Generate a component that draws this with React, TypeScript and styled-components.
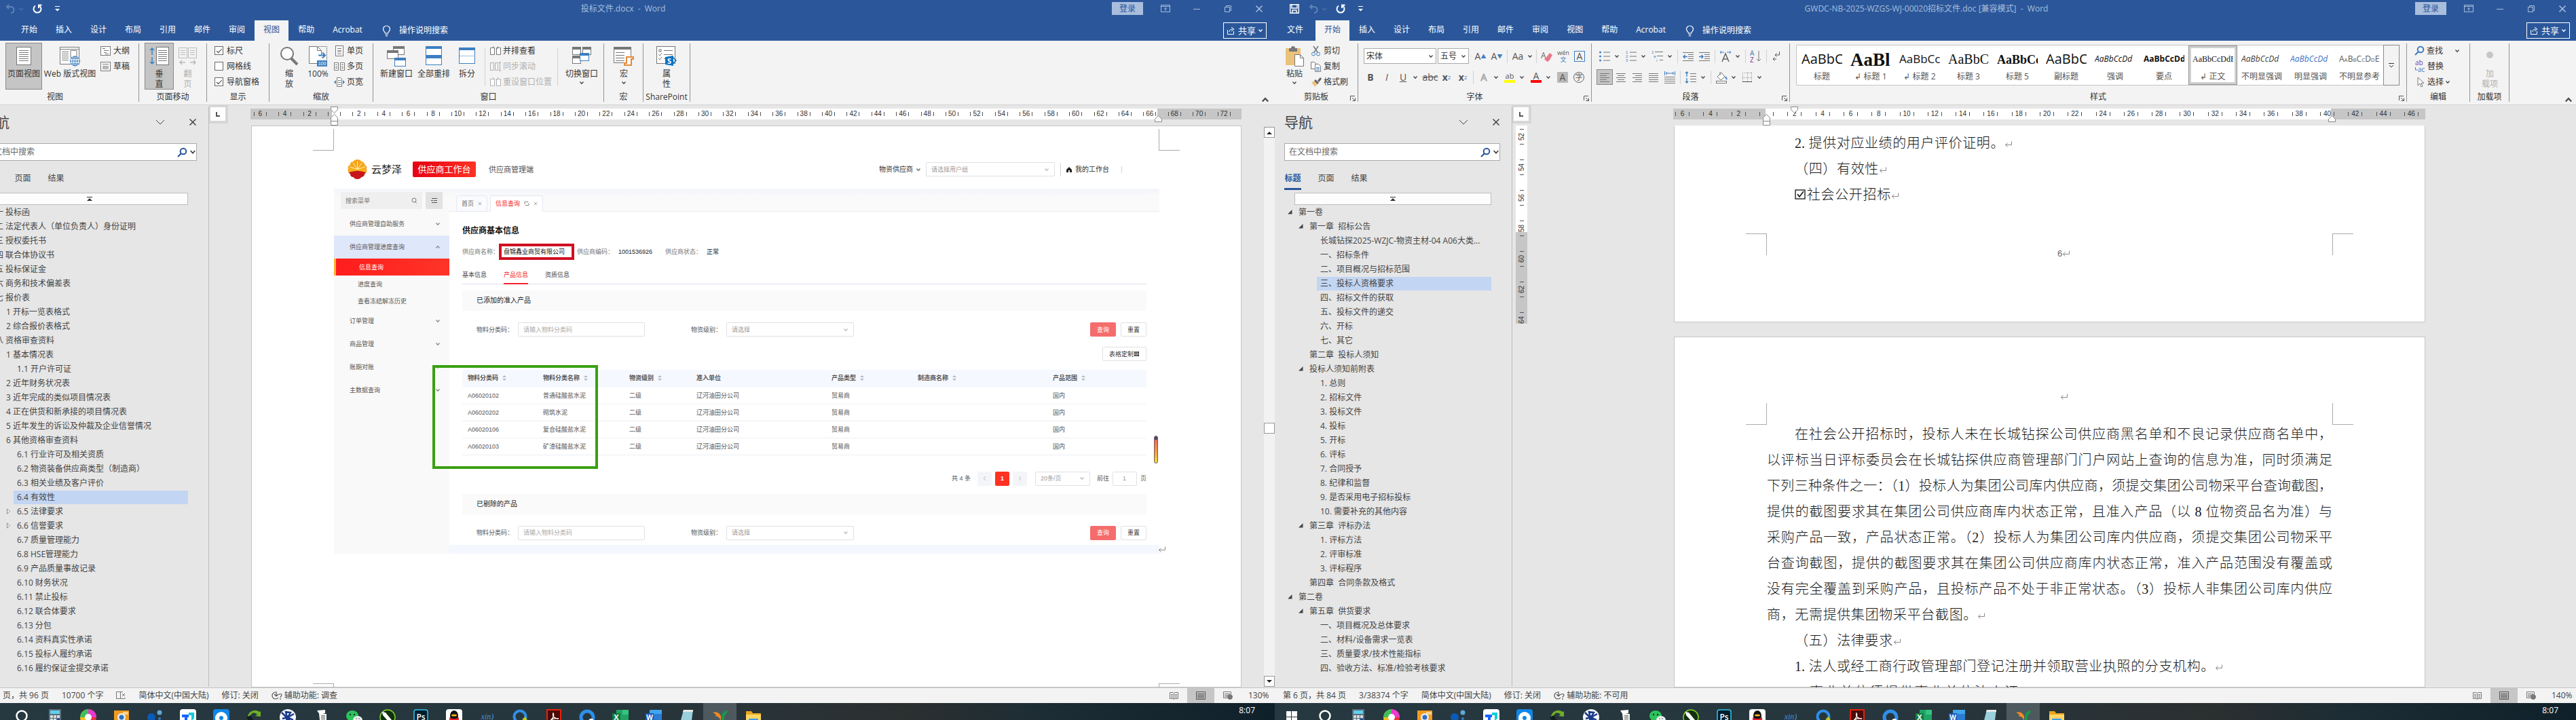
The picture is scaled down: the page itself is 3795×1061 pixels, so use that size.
import { ReactNode } from 'react';
import styled, { createGlobalStyle, css } from 'styled-components';

const UI_FONT = "'Open Sans', 'Noto Sans CJK SC', sans-serif";
const PORTAL_FONT = "'Liberation Sans', 'Noto Sans CJK SC', sans-serif";
const DOC_FONT = "'Liberation Serif', 'Noto Sans CJK SC', serif";

const GlobalStyle = createGlobalStyle`
  * { box-sizing: border-box; }
  body { margin: 0; overflow: hidden; background: #e6e6e6; }
  button, input, select { font: inherit; color: inherit; margin: 0; padding: 0; border: 0; background: none; border-radius: 0; }
  button { white-space: nowrap; }
  select { appearance: none; }
  svg { display: block; flex: none; }
`;

// 两块屏幕
const Desktop = styled.div`
  display: grid;
  grid-template-columns: 1878fr 1917fr;
  height: 100vh;
  font: 12px/16px ${UI_FONT};
  color: #333;
`;
const Screen = styled.div`
  overflow: hidden;
  min-width: 0;
`;
const WordWindow = styled.div<{ $cutLeft?: number; $cutRight?: number }>`
  display: flex;
  flex-direction: column;
  height: 100vh;
  margin-left: -${(p) => p.$cutLeft || 0}px;
  margin-right: -${(p) => p.$cutRight || 0}px;
`;

// 标题栏
const TitleBar = styled.header`
  display: grid;
  grid-template-columns: 1fr auto 1fr;
  align-items: center;
  height: 30px;
  flex: none;
  background: #2b579a;
  color: #a9bedc;
`;
const QuickAccess = styled.div`
  display: flex;
  align-items: center;
  gap: 14px;
  padding: 0 0 4px 22px;
`;
const WindowTitle = styled.h1`
  margin: 0;
  padding-bottom: 4px;
  font-size: 12px;
  font-weight: 400;
  white-space: pre;
`;
const WindowButtons = styled.div`
  display: flex;
  justify-content: flex-end;
  align-items: center;
  padding-bottom: 5px;
`;
const LoginButton = styled.button`
  width: 46px;
  height: 19px;
  margin-right: 10px;
  background: #a9bedc;
  color: #2b579a;
`;
const CaptionButton = styled.button`
  width: 46px;
  display: flex;
  justify-content: center;
`;

// 选项卡
const TabBar = styled.nav<{ $start: number }>`
  display: flex;
  height: 30px;
  flex: none;
  gap: 1px;
  padding-left: ${(p) => p.$start}px;
  background: #2b579a;
  color: #fff;
`;
const RibbonTab = styled.button<{ $active?: boolean; $file?: boolean }>`
  padding: 0 13px 2px;
  margin-right: ${(p) => (p.$file ? 4 : 0)}px;
  background: ${(p) => (p.$active ? '#f3f3f3' : 'transparent')};
  color: ${(p) => (p.$active ? '#2b579a' : '#fff')};
`;
const TellMe = styled.button`
  display: flex;
  align-items: center;
  gap: 12px;
  margin-left: 15px;
`;
const ShareButton = styled.button`
  display: flex;
  align-items: center;
  justify-content: center;
  gap: 4px;
  width: 64px;
  height: 24px;
  margin: 3px 12px 0 auto;
  border: 1px solid #fff;
  font-size: 13px;
`;

// 功能区
const Ribbon = styled.div`
  display: flex;
  height: 95px;
  flex: none;
  background: #f3f3f3;
  border-bottom: 1px solid #d2d2d2;
`;
const Group = styled.section<{ $w?: number }>`
  width: ${(p) => (p.$w ? `${p.$w}px` : 'auto')};
  display: flex;
  flex-direction: column;
  flex: none;
  position: relative;
`;
const GroupBody = styled.div<{ $pad?: number }>`
  display: flex;
  flex: 1;
  padding: 3px 0 0 ${(p) => p.$pad || 0}px;
`;
const GroupName = styled.div`
  height: 20px;
  line-height: 18px;
  text-align: center;
`;
const GroupLine = styled.div`
  width: 1px;
  margin: 4px 0;
  background: #949494;
`;
const ThinLine = styled.div<{ $h?: number; $gap?: number }>`
  width: 1px;
  height: ${(p) => p.$h || 20}px;
  margin: 0 ${(p) => p.$gap || 3}px;
  align-self: center;
  background: #d2d2d2;
`;
const Launcher = styled.button`
  position: absolute;
  right: 3px;
  bottom: 5px;
`;
const BigButton = styled.button<{ $w: number; $on?: boolean; $off?: boolean }>`
  width: ${(p) => p.$w}px;
  height: 69px;
  display: flex;
  flex-direction: column;
  align-items: center;
  padding-top: 4px;
  border: 1px solid ${(p) => (p.$on ? '#8a8a8a' : 'transparent')};
  background: ${(p) => (p.$on ? '#c5c5c5' : 'transparent')};
  color: ${(p) => (p.$off ? '#b1b1b1' : 'inherit')};
  line-height: 15px;
  white-space: pre;
  gap: 3px;
`;
const SmallColumn = styled.div<{ $pad?: number }>`
  display: flex;
  flex-direction: column;
  padding-left: ${(p) => p.$pad || 0}px;
`;
const SmallButton = styled.button<{ $off?: boolean }>`
  display: flex;
  align-items: center;
  gap: 3px;
  height: 23px;
  color: ${(p) => (p.$off ? '#b1b1b1' : 'inherit')};
`;
const CheckLabel = styled.label`
  display: flex;
  align-items: center;
  gap: 5px;
  height: 23px;
`;
const CheckBox = styled.input`
  appearance: none;
  width: 13px;
  height: 13px;
  background: #fff;
  border: 1px solid #6a6a6a;
  display: grid;
  place-items: center;
  &:checked::after {
    content: '';
    width: 3px;
    height: 7px;
    margin-bottom: 2px;
    border: solid #333;
    border-width: 0 1px 1px 0;
    rotate: 45deg;
  }
`;
const ToolRows = styled.div`
  display: flex;
  flex-direction: column;
  gap: 8px;
  padding-top: 8px;
`;
const ToolRow = styled.div`
  display: flex;
  height: 23px;
`;
const Tool = styled.button<{ $w?: number; $on?: boolean }>`
  width: ${(p) => p.$w || 24}px;
  display: flex;
  align-items: center;
  font-size: 14px;
  color: #555;
  ${(p) => p.$on && css`
    background: #c5c5c5;
    outline: 1px solid #8a8a8a;
    outline-offset: -1px;
  `}
`;
const ToolFace = styled.span`
  width: 24px;
  display: flex;
  justify-content: center;
  align-items: center;
`;
const Caret = styled.span`
  width: 12px;
  display: flex;
  justify-content: center;
`;
const ComboBox = styled.label<{ $w: number }>`
  display: flex;
  align-items: center;
  width: ${(p) => p.$w}px;
  margin-left: 2px;
  padding: 0 4px 0 3px;
  background: #fff;
  border: 1px solid #ababab;
  select { flex: 1; min-width: 0; outline: 0; }
`;

const Gallery = styled.div`
  display: flex;
  height: 60px;
  margin: 3px 10px 0 9px;
  padding-left: 1px;
  background: #fff;
  border: 1px solid #c6c6c6;
`;
const StyleCard = styled.button<{ $on?: boolean }>`
  width: 72px;
  display: flex;
  flex-direction: column;
  justify-content: flex-end;
  padding: 0 4px 4px;
  color: #555;
  ${(p) => p.$on && css`
    border: 1px solid #949494;
    padding: 0 3px 3px;
    box-shadow: inset 0 0 0 3px #d0d0d0;
  `}
`;
const StylePreview = styled.span<{ $size: number }>`
  height: 36px;
  line-height: 36px;
  margin: 0 2px;
  overflow: hidden;
  text-align: left;
  font-size: ${(p) => p.$size}px;
`;
const StyleName = styled.span`
  text-align: center;
`;
const GalleryMore = styled.button`
  width: 24px;
  margin: -1px;
  border: 1px solid #8a8a8a;
  background: #f3f3f3;
  display: grid;
  place-items: center;
`;
const Collapse = styled.button`
  margin: auto 9px 2px auto;
`;

// 工作区
const Workspace = styled.main`
  flex: 1;
  min-height: 0;
  display: grid;
  grid-template-columns: 350px 1fr;
  background: #e6e6e6;
`;
const NavPane = styled.aside`
  margin: 2px 0 1px;
  padding: 12px 17px 0 14px;
  border-right: 1px solid #bdbdbd;
  color: #444;
  min-width: 0;
  overflow: hidden;
`;
const NavHead = styled.div`
  display: flex;
  align-items: center;
  height: 24px;
  gap: 35px;
  margin-bottom: 18px;
  padding-bottom: 2px;
  h2 { flex: 1; margin: 0; font-size: 21px; line-height: 24px; font-weight: 400; }
`;
const NavSearch = styled.label`
  display: flex;
  align-items: center;
  gap: 4px;
  height: 26px;
  padding: 0 1px 0 6px;
  background: #fff;
  border: 1px solid #ababab;
  input { flex: 1; outline: 0; }
  input::placeholder { color: #6a6a6a; }
`;
const NavTabs = styled.div<{ $start: number }>`
  display: flex;
  gap: 24px;
  height: 43px;
  padding: 17px 0 0 ${(p) => p.$start}px;
`;
const NavTab = styled.button<{ $active?: boolean }>`
  width: 25px;
  height: 26px;
  padding-bottom: 6px;
  border-bottom: 3px solid ${(p) => (p.$active ? '#2b579a' : 'transparent')};
  color: ${(p) => (p.$active ? '#2b579a' : '#444')};
  font-weight: ${(p) => (p.$active ? 700 : 400)};
`;
const JumpTop = styled.button`
  display: flex;
  justify-content: center;
  align-items: center;
  width: 290px;
  height: 18px;
  margin: 4px 0 0 15px;
  background: #fdfdfd;
  border: 1px solid #bdbdbd;
`;
const Tree = styled.ul`
  list-style: none;
  margin: 0;
  padding: 0 13px 0 5px;
`;
const TreeRow = styled.li<{ $level: number }>`
  display: flex;
  align-items: center;
  height: 21px;
  padding-left: ${(p) => p.$level * 16}px;
`;
const TreeArrow = styled.span`
  width: 11px;
`;
const TreeLabel = styled.button<{ $on?: boolean }>`
  flex: 1;
  height: 20px;
  padding-left: 5px;
  text-align: left;
  white-space: pre;
  background: ${(p) => (p.$on ? '#c2d5f2' : 'transparent')};
`;

const DocArea = styled.div`
  display: grid;
  grid-template-columns: 29px 1fr 16px;
  min-width: 0;
  min-height: 0;
`;
const RulerSide = styled.div`
  overflow: hidden;
`;
const TabStop = styled.button`
  width: 28px;
  height: 27px;
  margin-bottom: 3px;
  border: solid #d6d6d6;
  border-width: 3px 4px 4px 2px;
  background: #fdfdfd;
  display: grid;
  place-items: center;
`;
const VRuler = styled.div`
  width: 17px;
  height: 292px;
  margin-left: 5px;
  overflow: hidden;
  background: linear-gradient(#fff 157px, #c6c6c6 157px);
  font: 10px/16px ${PORTAL_FONT};
`;
const VCells = styled.div`
  margin-top: -6px;
`;
const VCell = styled.div`
  height: 45px;
  display: flex;
  flex-direction: column;
  justify-content: center;
  align-items: center;
  &::before, &::after { content: ''; width: 6px; height: 1px; background: #555; }
  span { height: 21px; text-align: center; writing-mode: vertical-rl; rotate: 180deg; }
`;
const DocColumn = styled.div`
  display: flex;
  flex-direction: column;
  min-width: 0;
  min-height: 0;
`;
const HRuler = styled.div<{ $side: number; $left: number; $right: number }>`
  position: relative;
  flex: none;
  height: 16px;
  margin: 5px ${(p) => p.$side}px 9px ${(p) => p.$side - 1}px;
  background: linear-gradient(to right, #c6c6c6 ${(p) => p.$left}px, #fff ${(p) => p.$left}px, #fff calc(100% - ${(p) => p.$right}px), #c6c6c6 calc(100% - ${(p) => p.$right}px));
  font: 10px/16px ${PORTAL_FONT};
`;
const HCells = styled.div<{ $before: number; $after: number }>`
  display: flex;
  height: 16px;
  margin: 0 ${(p) => p.$after}px 0 -${(p) => p.$before}px;
`;
const HCell = styled.div<{ $gap: number }>`
  flex: 1;
  display: flex;
  justify-content: center;
  align-items: center;
  &::before, &::after { content: ''; width: 1px; height: 6px; background: #555; }
  span { width: ${(p) => p.$gap}px; text-align: center; }
`;
const Marker = styled.span<{ $left?: number; $right?: number; $top: number }>`
  position: absolute;
  top: ${(p) => p.$top}px;
  ${(p) => (p.$left !== undefined ? `left: ${p.$left - 5}px;` : `right: ${(p.$right || 0) - 6}px;`)}
`;
const Pages = styled.div<{ $side: number }>`
  flex: 1;
  min-height: 0;
  overflow: hidden;
  display: flex;
  flex-direction: column;
  padding: 0 ${(p) => p.$side}px;
`;
const Paper = styled.article<{ $margin: number; $h?: number }>`
  position: relative;
  flex: ${(p) => (p.$h ? `0 0 ${p.$h}px` : '1 0 0')};
  min-height: 0;
  padding: 0 ${(p) => p.$margin}px;
  background: #fff;
  border: 1px solid #c6c6c6;
  border-top-color: ${(p) => (p.$h ? '#fff' : '#c6c6c6')};
`;
// 页边距角标
const Corner = styled.i<{ $x: 'left' | 'right'; $m: number; $top?: number; $bottom?: number; $foot?: boolean }>`
  position: absolute;
  ${(p) => p.$x}: ${(p) => p.$m - 31}px;
  ${(p) => (p.$top !== undefined ? `top: ${p.$top}px;` : `bottom: ${p.$bottom}px;`)}
  width: 31px;
  height: 32px;
  border: 0 solid #ababab;
  border-${(p) => (p.$x === 'left' ? 'right' : 'left')}-width: 1px;
  border-${(p) => (p.$foot ? 'top' : 'bottom')}-width: 1px;
`;
// 文档网格：每行两端对齐
const DocLine = styled.p<{ $indent?: boolean; $w?: number }>`
  width: ${(p) => (p.$w ? `${p.$w}px` : 'auto')};
  height: 38px;
  margin: 0;
  padding-left: ${(p) => (p.$indent ? 41 : 0)}px;
  font: 300 20px/38px ${DOC_FONT};
  color: #1a1a1a;
  text-align: justify;
  text-align-last: justify;
  svg { display: inline-block; }
`;
const PageNumber = styled.p<{ $top: number }>`
  display: flex;
  justify-content: center;
  align-items: center;
  height: 20px;
  margin: ${(p) => p.$top}px 0 0 42px;
  font: 13px/20px ${PORTAL_FONT};
  color: #666;
`;
const ScrollBar = styled.div`
  display: flex;
  flex-direction: column;
  margin: 32px 0 1px;
  background: #f2f2f2;
`;
const ScrollTrack = styled.span<{ $part: number }>`
  flex: ${(p) => p.$part};
`;
const ScrollPart = styled.button`
  height: 16px;
  background: #fff;
  border: 1px solid #999;
  display: grid;
  place-items: center;
`;

// 供应商门户
const Portal = styled.div`
  position: relative;
  margin-top: 35px;
  font: 9px/14px ${PORTAL_FONT};
  color: #555;
`;
const PortalHeader = styled.div`
  display: flex;
  align-items: center;
  height: 57px;
  padding: 0 36px 0 20px;
`;
const Brand = styled.span`
  margin: 0 16px 0 6px;
  font-size: 15px;
  color: #222;
`;
const RedTab = styled.button`
  width: 93px;
  height: 23px;
  background: linear-gradient(100deg, #e60012, #ff3425);
  border-radius: 2px;
  color: #fff;
  font-size: 13px;
`;
const PlainTab = styled.button`
  margin: 0 auto 0 19px;
  font-size: 11px;
`;
const HeaderLink = styled.a`
  display: flex;
  align-items: center;
  gap: 5px;
  font-size: 10px;
  color: #333;
  text-decoration: none;
`;
const Field = styled.label<{ $w: number; $gap?: number }>`
  display: flex;
  align-items: center;
  width: ${(p) => p.$w}px;
  height: 21px;
  margin-left: ${(p) => p.$gap || 0}px;
  padding: 0 8px 0 7px;
  background: #fff;
  border: 1px solid #dfe1e6;
  border-radius: 2px;
  input, select { flex: 1; min-width: 0; outline: 0; color: #999; }
  input::placeholder { color: #aaa; }
`;
const PortalBody = styled.div`
  display: grid;
  grid-template-columns: 170px 1fr;
`;
const SideMenu = styled.nav`
  background: linear-gradient(#f3f5fb, #f9f9f9 12px);
`;
const SideSearch = styled.div`
  display: flex;
  gap: 5px;
  height: 35px;
  padding: 5px 10px;
  label { display: flex; align-items: center; flex: 1; min-width: 0; padding: 0 8px 0 7px; background: #efefef; }
  input { flex: 1; min-width: 0; }
  button { flex: none; width: 25px; background: #e2e2e2; display: grid; place-items: center; }
`;
const MenuItem = styled.button<{ $open?: boolean }>`
  display: flex;
  justify-content: space-between;
  align-items: center;
  width: 100%;
  height: 34px;
  padding: 0 14px 0 23px;
  background: ${(p) => (p.$open ? '#dfe7fb' : 'transparent')};
`;
const SubItem = styled.button<{ $on?: boolean }>`
  display: block;
  width: 100%;
  height: 25px;
  text-align: left;
  padding-left: ${(p) => (p.$on ? 34 : 35)}px;
  ${(p) => p.$on && css`
    border-left: 3px solid #ffb52e;
    background: linear-gradient(90deg, #ff1d1d, #ff3427);
    color: #fff;
  `}
`;
const PortalMain = styled.div`
  position: relative;
  background: #fff;
`;
const TabStrip = styled.div`
  display: flex;
  align-items: flex-end;
  gap: 4px;
  height: 34px;
  padding-left: 10px;
  background: linear-gradient(#f3f5fb, #fafafa 12px);
  border-bottom: 1px solid #ebebeb;
`;
const PageTab = styled.button<{ $on?: boolean }>`
  display: flex;
  align-items: center;
  gap: 6px;
  height: 24px;
  padding: 0 7px;
  margin-bottom: -1px;
  border: 1px solid #e6e8f2;
  border-bottom-color: ${(p) => (p.$on ? '#fff' : '#e6e8f2')};
  border-radius: 3px 3px 0 0;
  background: ${(p) => (p.$on ? '#fff' : '#fafbff')};
  color: ${(p) => (p.$on ? '#f5222d' : '#666')};
`;
const PortalContent = styled.div`
  padding: 18px 19px 7px;
  h3 { margin: 0 0 9px; font-size: 12px; line-height: 20px; color: #111; }
`;
const InfoLine = styled.div`
  display: flex;
  align-items: center;
  height: 24px;
  color: #777;
`;
const RedFrame = styled.strong`
  width: 111px;
  height: 24px;
  margin-right: 4px;
  padding-left: 3px;
  line-height: 16px;
  border: 4px solid #cf1020;
  font-weight: 400;
  color: #111;
`;
const InfoValue = styled.span`
  margin: 0 19px 0 7px;
  color: #222;
`;
const InnerTabs = styled.div`
  display: flex;
  align-items: flex-end;
  gap: 25px;
  height: 36px;
  border-bottom: 1px solid #dcdfea;
`;
const InnerTab = styled.button<{ $on?: boolean }>`
  height: 23px;
  padding-bottom: 4px;
  margin-bottom: -1px;
  border-bottom: 2px solid ${(p) => (p.$on ? '#f5222d' : 'transparent')};
  color: ${(p) => (p.$on ? '#f5222d' : '#444')};
`;
const SectionHead = styled.h4<{ $top: number }>`
  height: 30px;
  margin: ${(p) => p.$top}px 0 17px;
  padding-left: 21px;
  background: #fafafa;
  font-size: 10px;
  line-height: 30px;
  font-weight: 400;
  color: #222;
`;
const FilterRow = styled.div`
  display: flex;
  align-items: center;
  height: 21px;
  padding-left: 21px;
`;
const FilterLabel = styled.span<{ $w: number; $gap?: number }>`
  width: ${(p) => p.$w}px;
  margin-left: ${(p) => p.$gap || 0}px;
`;
const PortalButton = styled.button<{ $red?: boolean }>`
  width: 38px;
  height: 21px;
  border: 1px solid ${(p) => (p.$red ? '#f56c6c' : '#dfe1e6')};
  border-radius: 2px;
  background: ${(p) => (p.$red ? '#f56c6c' : '#fff')};
  color: ${(p) => (p.$red ? '#fff' : '#444')};
  &:first-of-type { margin-left: auto; margin-right: 7px; }
`;
const CustomButton = styled.button`
  display: flex;
  align-items: center;
  gap: 1px;
  height: 21px;
  margin: 15px 0 13px auto;
  padding: 0 10px 0 9px;
  border: 1px solid #dfe1e6;
  border-radius: 2px;
  color: #333;
`;
const TableArea = styled.div`
  position: relative;
`;
const GreenFrame = styled.i`
  position: absolute;
  left: -44px;
  top: -7px;
  width: 244px;
  height: 153px;
  border: 4px solid #3aa012;
`;
const DataTable = styled.table`
  width: 100%;
  table-layout: fixed;
  border-collapse: collapse;
  th, td { height: 25px; padding: 0 0 0 8px; text-align: left; border-bottom: 1px solid #eef0f5; }
  th { background: #f5f8fe; font-weight: 700; border-bottom-color: #f5f8fe; }
  th svg { display: inline-block; vertical-align: -2px; margin-left: 6px; }
`;
const Pager = styled.div`
  display: flex;
  justify-content: flex-end;
  align-items: center;
  height: 21px;
  margin-top: 24px;
`;
const PagerButton = styled.button<{ $on?: boolean }>`
  width: 21px;
  height: 21px;
  margin-left: ${(p) => (p.$on ? 5 : 0)}px;
  margin-right: ${(p) => (p.$on ? 5 : 0)}px;
  display: grid;
  place-items: center;
  border-radius: 2px;
  background: ${(p) => (p.$on ? '#ff3223' : '#f4f5f8')};
  color: #fff;
  font-weight: 700;
`;
const BottomStrip = styled.div`
  height: 13px;
  background: #f4f7fe;
`;
const ScrollGear = styled.i`
  position: absolute;
  right: 2px;
  top: 364px;
  width: 6px;
  height: 41px;
  border: 1px solid #7a5a66;
  border-radius: 3px;
  background: linear-gradient(#4a4a6a 5px, #f5694f 5px, #f0a03c 60%, #f0e030);
`;
const EndMark = styled.span`
  position: absolute;
  right: -11px;
  bottom: 1px;
`;

// 状态栏
const StatusBar = styled.footer<{ $start: number }>`
  display: flex;
  align-items: center;
  gap: 19px;
  height: 23px;
  flex: none;
  padding-left: ${(p) => p.$start}px;
  background: #f3f3f3;
  border-top: 1px solid #c6c6c6;
  color: #444;
  white-space: nowrap;
`;
const StatusItem = styled.span`
  display: flex;
  align-items: center;
  gap: 3px;
`;
const ViewModes = styled.div`
  display: flex;
  align-self: stretch;
  margin-left: auto;
`;
const ViewMode = styled.button<{ $on?: boolean }>`
  width: 40px;
  display: grid;
  place-items: center;
  background: ${(p) => (p.$on ? '#c6c6c6' : 'transparent')};
`;
const Zoom = styled.span`
  width: 31px;
  margin: 0 8px 0 -9px;
`;

// 任务栏
const TaskBar = styled.footer`
  display: flex;
  height: 25px;
  flex: none;
  overflow: hidden;
  background: linear-gradient(90deg, #263840 0%, #27363d 50%, #2b2f30 72%, #1d2d35 82%, #10202a 100%);
`;
const TaskSlot = styled.button<{ $on?: boolean }>`
  width: 49px;
  height: 40px;
  display: flex;
  justify-content: center;
  padding-top: 9px;
  align-items: flex-start;
  background: ${(p) => (p.$on ? '#4d595f' : 'transparent')};
`;
const Clock = styled.time`
  margin: 3px 29px 0 auto;
  color: #fff;
`;

const Svg = ({ w, h, vb, children }: { w: number; h: number; vb?: string; children: ReactNode }) => (
  <svg width={w} height={h} viewBox={vb || `0 0 ${w} ${h}`} fill="none" stroke="#777" aria-hidden="true">
    {children}
  </svg>
);

const Down = ({ c = '#444', s = 6 }: { c?: string; s?: number }) => (
  <Svg w={s} h={s} vb="0 0 6 6"><path d="M.5 1.5 3 4.2 5.5 1.5" stroke={c} strokeWidth="1.3" /></Svg>
);
const Up = ({ c = '#444', s = 6 }: { c?: string; s?: number }) => (
  <Svg w={s} h={s} vb="0 0 6 6"><path d="M.5 4.5 3 1.8 5.5 4.5" stroke={c} strokeWidth="1.3" /></Svg>
);
const Cross = ({ c = '#888', s = 7 }: { c?: string; s?: number }) => (
  <Svg w={s} h={s} vb="0 0 8 8"><path d="M1 1l6 6M7 1 1 7" stroke={c} /></Svg>
);
const Return = () => (
  <Svg w={12} h={10}><path d="M10.500 .5v5H1.500M4.500 2.500l-3 3 3 3" stroke="#8a8a8a" /></Svg>
);
const Magnifier = ({ c = '#2b579a', s = 15 }: { c?: string; s?: number }) => (
  <Svg w={s} h={s} vb="0 0 15 15"><circle cx="9" cy="6" r="4.300" stroke={c} strokeWidth="2" /><path d="M6 9 1 14" stroke={c} strokeWidth="2.200" /></Svg>
);
const Sort = () => (
  <Svg w={6} h={10}><path d="M0 4 3 1l3 3zM0 6l3 3 3-3z" fill="#b5b8c0" stroke="none" /></Svg>
);
const lines = (x1: number, x2: number, ys: number[], c = '#777') => (
  <path d={ys.map((y) => `M${x1} ${y}H${x2}`).join('')} stroke={c} />
);

// 大图标 30 x 30
const Big = ({ children }: { children: ReactNode }) => <Svg w={30} h={30}>{children}</Svg>;
const ReadIcon = () => (
  <Big><rect x="-1" y="4" width="32" height="23" fill="#4a7ebb" stroke="none" /><path d="M4 8h10v15H4zM16 8h10v15H16z" fill="#fff" stroke="none" /></Big>
);
const PageIcon = () => (
  <Big><rect x="4.500" y="1.500" width="21" height="26" fill="#fff" />{lines(8, 22, [6.5, 9.5, 12.5, 15.5, 18.5, 21.5])}</Big>
);
const WebIcon = () => (
  <Big>
    <rect x=".5" y="1.500" width="28" height="25" fill="#fff" />
    <path d="M0 4.500h28M16 6.500h9v10h-9z" />
    {lines(3, 13, [8.5, 11.5, 14.5, 17.5, 20.5])}
    <circle cx="22.500" cy="22" r="7" fill="#fff" stroke="#3d7fc1" />
    <path d="M15.500 22h14M22.500 15v14M17 18h11M17 26h11" stroke="#3d7fc1" />
    <ellipse cx="22.500" cy="22" rx="3.500" ry="7" stroke="#3d7fc1" />
  </Big>
);
const VerticalIcon = () => (
  <Big><path d="M4 3v10M1 6l3-3 3 3M4 16v10M1 23l3 3 3-3" stroke="#3d7fc1" strokeWidth="1.500" /><rect x="10.500" y="1.500" width="18" height="26" fill="#fff" />{lines(13, 26, [6.5, 9.5, 12.5, 15.5, 18.5, 21.5])}</Big>
);
const FlipIcon = () => (
  <Big><g stroke="#bbb"><path d="M1.500 2.500h12v15h-12zM15.500 2.500h12v15h-12z" /><path d="M4 6.500h7M4 9.500h7M4 12.500h7M18 6.500h7M18 9.500h7M18 12.500h7" /><path d="M3 24h8M6 21l-3 3 3 3M26 24h-8M23 21l3 3-3 3" strokeWidth="1.500" /></g></Big>
);
const ZoomIcon = () => (
  <Big><circle cx="12" cy="11" r="9" fill="#fff" strokeWidth="2" /><path d="M18 18l9 9" strokeWidth="4" /></Big>
);
const HundredIcon = () => (
  <Big>
    <path d="M13 25.500H1.500v-25h12l6 6v6" fill="#fff" /><path d="M13.500.5v6h6" /><path d="M15 .5h12.500V22" strokeDasharray="2 1" />
    <path d="M15 13.500h10M21 9.500l4 4-4 4" stroke="#3d7fc1" strokeWidth="2" />
    <rect x="13" y="21" width="15" height="9" fill="#3d7fc1" stroke="none" />
    <text x="20.500" y="28" fontSize="7" fill="#fff" stroke="none" textAnchor="middle" fontFamily="Liberation Sans">100</text>
  </Big>
);
const miniWin = (x: number, y: number, w: number, h: number, c: string) => (
  <g key={`${x}-${y}`}><rect x={x + 0.5} y={y + 0.5} width={w - 1} height={h - 1} fill="#fff" stroke={c === '#3d7fc1' ? c : '#777'} /><rect x={x} y={y} width={w} height="4" fill={c} stroke="none" /></g>
);
const NewWinIcon = () => <Big>{miniWin(10, 0, 17, 13, '#777')}{miniWin(1, 6, 17, 13, '#777')}{miniWin(12, 17, 17, 13, '#3d7fc1')}</Big>;
const ArrangeIcon = () => <Big>{miniWin(3, 0, 24, 14, '#3d7fc1')}{miniWin(3, 14, 24, 14, '#3d7fc1')}</Big>;
const SplitIcon = () => <Big>{miniWin(3, 2, 24, 24, '#3d7fc1')}<path d="M4 14.500h22" stroke="#3d7fc1" strokeDasharray="1 1" /></Big>;
const SwitchIcon = () => <Big>{miniWin(1, 1, 13, 12, '#777')}{miniWin(16, 1, 13, 12, '#777')}{miniWin(1, 14, 13, 12, '#777')}{miniWin(12, 10, 14, 12, '#3d7fc1')}</Big>;
const MacroIcon = () => (
  <Big>{miniWin(0, 1, 26, 24, '#777')}{lines(3, 16, [9.5, 13.5, 17.5, 21.5])}<path d="M19 16h10v3h-3v9H16v-3h3z" fill="#fff" stroke="#e08a3c" strokeWidth="2" /></Big>
);
const PropIcon = () => (
  <Big>
    <rect x=".5" y=".5" width="27" height="25" fill="#fff" />
    <path d="M4 5h3v3H4zM11 6.500h13M3 12l2 2 3-4M11 12.500h13M3 18l2 2 3-4M11 18.500h6" />
    <path d="M13 16l12-2v15l-12-2z" fill="#0072c6" stroke="none" /><path d="M25 17l4 4-4 4" stroke="#0072c6" strokeWidth="1.500" />
    <text x="19" y="26" fontSize="11" fontWeight="700" fill="#fff" stroke="none" textAnchor="middle" fontFamily="Open Sans">S</text>
  </Big>
);
const PasteIcon = () => (
  <Big><path d="M2 3h22v25H2z" fill="#ebc27a" stroke="none" /><path d="M7 3h3a3 3 0 0 1 6 0h3v5H7z" fill="#777" stroke="none" /><path d="M15.500 12.500h8l5 5v12h-13z" fill="#fff" /><path d="M23.500 12.500v5h5" /></Big>
);
const DotIcon = () => <Big><circle cx="15" cy="13" r="5" fill="#c6c6c6" stroke="none" /></Big>;

// 小图标 16 x 16
const Small = ({ children }: { children: ReactNode }) => <Svg w={16} h={16}>{children}</Svg>;
const OutlineIcon = () => <Small><rect x=".5" y="1.500" width="14" height="13" fill="#fff" /><path d="M3 4.500h4M5 7.500h7M5 10.500h4M7 12.500h5" /></Small>;
const DraftIcon = () => <Small><rect x=".5" y="1.500" width="14" height="13" fill="#fff" />{lines(3, 12, [4.5, 7.5, 9.5, 11.5])}</Small>;
const OnePage = () => <Small><rect x="2.500" y=".5" width="11" height="15" fill="#fff" />{lines(5, 11, [4.5, 7.5, 9.5, 12.5])}</Small>;
const MultiPage = () => <Small><path d="M.5 2.500h6v11h-6zM9.500 2.500h6v11h-6z" fill="#fff" />{lines(2, 5, [5.5, 8.5, 10.5])}{lines(11, 14, [5.5, 8.5, 10.5])}</Small>;
const PageWidth = () => <Small><path d="M4.500 1.500h5l2 2v11h-7z" fill="#fff" />{lines(6, 10, [5.5, 8.5, 11.5])}<path d="M3 5 0 8l3 3zM13 5l3 3-3 3z" fill="#3d7fc1" stroke="none" /></Small>;
const SideBySide = ({ c = '#777' }: { c?: string }) => <Small><path d="M.5 3.500h6v10h-6zM9.500 3.500h6v10h-6zM4 1l3 4M12 1l-2 4" stroke={c} fill="#fff" /></Small>;
const SyncScroll = () => <Small><path d="M.5 2.500h5v11h-5zM7.500 2.500h4v11h-4zM14.500 1v14M13 3l1.500-2L16 3M13 13l1.500 2 1.500-2" stroke="#b1b1b1" /></Small>;
const CutIcon = () => <Small><path d="M4 1l6 9M11 1 5 10" strokeWidth="1.500" /><circle cx="4" cy="12.500" r="2.500" stroke="#3d7fc1" /><circle cx="11" cy="12.500" r="2.500" stroke="#3d7fc1" /></Small>;
const CopyIcon = () => <Small><path d="M.5 1.500h5l3 3v7h-8z" fill="#fff" /><path d="M6.500 4.500h5l3 3v8h-8z" fill="#fff" />{lines(8, 13, [9.5, 11.5, 13.500], '#3d7fc1')}</Small>;
const BrushIcon = () => <Small><path d="M1 8l5 7 5-5-4-4z" fill="#ebc27a" stroke="none" /><path d="M6 5l5 5M11 7l4-5" strokeWidth="3" stroke="#666" /></Small>;
const FindIcon = () => <Magnifier c="#3d7fc1" />;
const ReplaceIcon = () => (
  <Svg w={16} h={20}><g stroke="none" fontFamily="Open Sans" fontSize="10"><text x="1" y="8" fill="#7a3e9d">ab</text><text x="5" y="18" fill="#3d7fc1">ac</text></g><path d="M1.500 11v4h3" stroke="#3d7fc1" /></Svg>
);
const PointerIcon = () => <Small><path d="M5 1v12l3-3 2 5 2-1-2-4.500h4z" fill="#fff" /></Small>;

// 字体与段落组图标
const ParaLines = ({ xs }: { xs: [number, number][] }) => (
  <Small><path d={xs.map(([a, b], i) => `M${a} ${2.5 + i * 3}H${b}`).join('')} /></Small>
);
const ListIcon = ({ kind }: { kind: 'dot' | 'num' | 'multi' }) => (
  <Svg w={18} h={18}>
    {kind === 'multi' ? <path d="M5 2.500h12M8 8.500h9M12 14.500h5" /> : <path d="M7 3h10M7 9h10M7 15h10" />}
    <g fill="#3d7fc1" stroke="none" fontSize="6" fontFamily="Liberation Sans">
      {kind === 'dot' && [3, 9, 15].map((y) => <circle key={y} cx="2.500" cy={y} r="1.500" />)}
      {kind === 'num' && [1, 2, 3].map((n) => <text key={n} x="1" y={n * 6 - 1}>{n}</text>)}
      {kind === 'multi' && <><text x="0" y="5">1</text><text x="3" y="11">a</text><text x="7" y="17">i</text></>}
    </g>
  </Svg>
);
const IndentIcon = ({ flip }: { flip?: boolean }) => (
  <Small><path d="M0 2.500h16M8 5.500h8M8 8.500h8M8 11.500h8M0 14.500h16" /><path d={flip ? 'M0 8.500h6M3.500 6 6 8.500 3.500 11' : 'M7 8.500H1M3.500 6 1 8.500 3.500 11'} stroke="#3d7fc1" strokeWidth="1.500" /></Small>
);
const WidthIcon = () => <Svg w={18} h={18}><path d="M4 17 9 5l5 12M6 13h6" stroke="#666" strokeWidth="1.500" /><path d="M1 3h6M3 1 1 3l2 2M17 3h-6M15 1l2 2-2 2" stroke="#3d7fc1" /></Svg>;
const SortAZ = () => (
  <Svg w={18} h={20}><g stroke="none" fontFamily="Open Sans" fontSize="10"><text x="0" y="9" fill="#3d7fc1">A</text><text x="0" y="19" fill="#7a3e9d">Z</text></g><path d="M13 2v15M10 14l3 3 3-3" /></Svg>
);
const MarksIcon = () => <Svg w={14} h={16}><path d="M10.500 1v5H4M6.500 3.500 4 6l2.500 2.500M6 12H1M3.500 9.500 1 12l2.500 2.500" stroke="#555" /></Svg>;
const DistIcon = () => <Svg w={18} h={18}><path d="M1.500 0v6M16.500 0v6M3 3h12M5 1 3 3l2 2M13 1l2 2-2 2" stroke="#3d7fc1" />{lines(1, 17, [8.5, 11.5, 14.5, 17.5])}</Svg>;
const SpacingIcon = () => <Svg w={18} h={18}><path d="M3 1v7M1 3l2-2 2 2M3 10v7M1 15l2 2 2-2" stroke="#3d7fc1" strokeWidth="1.300" />{lines(8, 17, [3.5, 7.5, 11.5, 15.5])}</Svg>;
const FillIcon = () => <Svg w={18} h={18}><path d="M3 8l6-6 5 6-6 5zM7 6V1" fill="#fff" /><path d="M15 8l2 4" stroke="#3d7fc1" strokeWidth="2" /><rect x="1.500" y="14.500" width="15" height="3" fill="#fff" /></Svg>;
const BorderIcon = () => <Small><path d="M1.500 1v13M8.500 1v13M14.500 1v13M1 1.500h14M1 8.500h14" strokeDasharray="1 2" /><path d="M1 14.500h14" stroke="#555" /></Small>;
const EraserIcon = () => (
  <Svg w={18} h={18}><path d="M7 12l6-8 4 3-5 9z" fill="#e8798a" stroke="none" /><text x="0" y="12" fontSize="12" fill="#666" stroke="none" fontFamily="Open Sans">A</text><path d="M6 12l5 4" stroke="#e8798a" strokeWidth="3" /></Svg>
);

const Pinyin = styled.span`
  display: flex;
  flex-direction: column;
  font-size: 9px;
  line-height: 10px;
  text-align: center;
  b { font-weight: 400; color: #3d7fc1; }
`;
const BoxedLetter = styled.span`
  width: 16px;
  height: 16px;
  line-height: 14px;
  text-align: center;
  border: 1px solid #3d7fc1;
`;
const ShadedLetter = styled(BoxedLetter)`
  border-color: #b9b9b9;
  background: #b9b9b9;
`;
const RoundLetter = styled(BoxedLetter)`
  border-color: #666;
  border-radius: 8px;
  font-size: 11px;
`;
const BarLetter = styled.span<{ $c: string; $small?: boolean }>`
  width: 16px;
  height: 16px;
  line-height: 12px;
  text-align: center;
  font-size: ${(p) => (p.$small ? 11 : 14)}px;
  border-bottom: 4px solid ${(p) => p.$c};
`;
const PaleLetter = styled.span`
  color: #fff;
  -webkit-text-stroke: 1px #aaa;
`;
const Blue = styled.small`
  font-size: 8px;
  color: #3d7fc1;
`;

type Side = 'left' | 'right';

function TopBars({ title, side, active }: { title: string; side: Side; active: string }) {
  const tabs = ['开始', '插入', '设计', '布局', '引用', '邮件', '审阅', '视图', '帮助', 'Acrobat'];
  return (
    <>
      <TitleBar>
        <QuickAccess>
          <Svg w={14} h={14}><path d="M.700.700h12.600v12.600H.700z" stroke="#fff" strokeWidth="1.400" /><path d="M3 1v5h8V1M4 13V9h6v4" stroke="#fff" strokeWidth="1.400" /></Svg>
          <Svg w={26} h={14}><path d="M2 4h6a4.500 4.500 0 0 1 0 9M5 1 2 4l3 3" stroke="#5f82b8" strokeWidth="2" /><path d="M20 6l3 3 3-3" stroke="#5f82b8" /></Svg>
          <Svg w={14} h={14}><path d="M4 2.500a5.500 5.500 0 1 0 6 0M9 6V1.500h4.500" stroke="#fff" strokeWidth="2" /></Svg>
          <Svg w={16} h={10}><path d="M5 1.500h7" stroke="#fff" /><path d="M5 5h7L8.500 8.500z" fill="#fff" stroke="none" /></Svg>
        </QuickAccess>
        <WindowTitle>{title}</WindowTitle>
        <WindowButtons>
          <LoginButton>登录</LoginButton>
          <CaptionButton aria-label="功能区显示选项"><Svg w={14} h={11}><path d="M.5.5h13v10H.5zM0 2.500h14M7 9V4.500M5 6.500l2-2 2 2" stroke="#a9bedc" /></Svg></CaptionButton>
          <CaptionButton aria-label="最小化"><Svg w={10} h={10}><path d="M0 5.500h10" stroke="#a9bedc" /></Svg></CaptionButton>
          <CaptionButton aria-label="还原"><Svg w={10} h={10}><path d="M.5 2.500h7v7h-7zM2.500 2V.5h7v7H8" stroke="#a9bedc" /></Svg></CaptionButton>
          <CaptionButton aria-label="关闭"><Cross c="#a9bedc" s={12} /></CaptionButton>
        </WindowButtons>
      </TitleBar>
      <TabBar $start={side === 'left' ? 60 : 5}>
        {side === 'right' && <RibbonTab $file>文件</RibbonTab>}
        {tabs.map((t) => <RibbonTab key={t} $active={t === active}>{t}</RibbonTab>)}
        <TellMe>
          <Svg w={13} h={17}><path d="M4.500 12c0-2-3-3-3-6a5 5 0 0 1 10 0c0 3-3 4-3 6zM4.500 14h4M5 16h3" stroke="#fff" strokeWidth="1.200" /></Svg>
          操作说明搜索
        </TellMe>
        <ShareButton>
          <Svg w={12} h={12}><path d="M.5 5v6.500h9V7M3 8c0-3 2-4 5-4M6 1l4 3-4 3" stroke="#fff" /></Svg>
          共享 <Down c="#fff" />
        </ShareButton>
      </TabBar>
      <Ribbon>
        {side === 'left' ? <ViewRibbon /> : <HomeRibbon />}
        <Collapse aria-label="折叠功能区"><Up s={10} /></Collapse>
      </Ribbon>
    </>
  );
}

function ViewRibbon() {
  return (
    <>
      <Group $w={246}>
        <GroupBody $pad={4}>
          <BigButton $w={46} aria-label="阅读视图"><ReadIcon /></BigButton>
          <BigButton $w={54} $on><PageIcon />页面视图</BigButton>
          <BigButton $w={82}><WebIcon />Web 版式视图</BigButton>
          <SmallColumn $pad={4}>
            <SmallButton><OutlineIcon />大纲</SmallButton>
            <SmallButton><DraftIcon />草稿</SmallButton>
          </SmallColumn>
        </GroupBody>
        <GroupName>视图</GroupName>
      </Group>
      <GroupLine />
      <Group $w={99}>
        <GroupBody $pad={8}>
          <BigButton $w={43} $on><VerticalIcon />{'垂\n直'}</BigButton>
          <BigButton $w={41} $off><FlipIcon />{'翻\n页'}</BigButton>
        </GroupBody>
        <GroupName>页面移动</GroupName>
      </Group>
      <GroupLine />
      <Group $w={91}>
        <GroupBody $pad={11}>
          <SmallColumn>
            <CheckLabel><CheckBox type="checkbox" defaultChecked />标尺</CheckLabel>
            <CheckLabel><CheckBox type="checkbox" />网格线</CheckLabel>
            <CheckLabel><CheckBox type="checkbox" defaultChecked />导航窗格</CheckLabel>
          </SmallColumn>
        </GroupBody>
        <GroupName>显示</GroupName>
      </Group>
      <GroupLine />
      <Group $w={152}>
        <GroupBody $pad={9}>
          <BigButton $w={40}><ZoomIcon />{'缩\n放'}</BigButton>
          <BigButton $w={45}><HundredIcon />100%</BigButton>
          <SmallColumn $pad={1}>
            <SmallButton><OnePage />单页</SmallButton>
            <SmallButton><MultiPage />多页</SmallButton>
            <SmallButton><PageWidth />页宽</SmallButton>
          </SmallColumn>
        </GroupBody>
        <GroupName>缩放</GroupName>
      </Group>
      <GroupLine />
      <Group $w={339}>
        <GroupBody $pad={7}>
          <BigButton $w={54}><NewWinIcon />新建窗口</BigButton>
          <BigButton $w={56}><ArrangeIcon />全部重排</BigButton>
          <BigButton $w={42}><SplitIcon />拆分</BigButton>
          <ThinLine $h={55} $gap={5} />
          <SmallColumn $pad={2}>
            <SmallButton><SideBySide />并排查看</SmallButton>
            <SmallButton $off><SyncScroll />同步滚动</SmallButton>
            <SmallButton $off><SideBySide c="#b1b1b1" />重设窗口位置</SmallButton>
          </SmallColumn>
          <ThinLine $h={55} $gap={8} />
          <BigButton $w={54}><SwitchIcon />切换窗口<Down /></BigButton>
        </GroupBody>
        <GroupName>窗口</GroupName>
      </Group>
      <GroupLine />
      <Group $w={57}>
        <GroupBody $pad={7}><BigButton $w={44}><MacroIcon />宏<Down /></BigButton></GroupBody>
        <GroupName>宏</GroupName>
      </Group>
      <GroupLine />
      <Group $w={68}>
        <GroupBody $pad={12}><BigButton $w={44}><PropIcon />{'属\n性'}</BigButton></GroupBody>
        <GroupName>SharePoint</GroupName>
      </Group>
      <GroupLine />
    </>
  );
}

const DropTool = ({ w, children }: { w: number; children: ReactNode }) => (
  <Tool $w={w}><ToolFace>{children}</ToolFace><Caret><Down /></Caret></Tool>
);
const PlainTool = ({ on, children }: { on?: boolean; children: ReactNode }) => (
  <Tool $on={on}><ToolFace>{children}</ToolFace></Tool>
);
const LaunchIcon = () => (
  <Launcher aria-label="更多设置"><Svg w={8} h={8}><path d="M.5 7V.5H7M3 3l4 4M7.500 3.500v4h-4" stroke="#555" /></Svg></Launcher>
);

const styleCards = [
  { name: '标题', text: 'AaBbC', size: 20, font: "'Open Sans'", color: '#111' },
  { name: '↲ 标题 1', text: 'AaBl', size: 27, font: "'Liberation Serif'", weight: 700, color: '#111' },
  { name: '↲ 标题 2', text: 'AaBbCc', size: 17, font: "'Open Sans'", color: '#111' },
  { name: '标题 3', text: 'AaBbC', size: 20, font: "'Liberation Serif'", color: '#111' },
  { name: '标题 5', text: 'AaBbCc', size: 18, font: "'Liberation Serif'", weight: 700, color: '#111' },
  { name: '副标题', text: 'AaBbC', size: 20, font: "'Open Sans'", color: '#111' },
  { name: '强调', text: 'AaBbCcDd', size: 12, font: "'Open Sans'", italic: true, color: '#111' },
  { name: '要点', text: 'AaBbCcDd', size: 12, font: "'Open Sans'", weight: 700, color: '#111' },
  { name: '↲ 正文', text: 'AaBbCcDdE', size: 12, font: "'Liberation Serif'", color: '#111', on: true },
  { name: '不明显强调', text: 'AaBbCcDd', size: 12, font: "'Open Sans'", italic: true, color: '#404040' },
  { name: '明显强调', text: 'AaBbCcDd', size: 12, font: "'Open Sans'", italic: true, color: '#4472c4' },
  { name: '不明显参考', text: 'AaBbCcDdE', size: 12, font: "'Open Sans'", caps: true, color: '#5a5a5a' },
];
const PreviewText = styled.span<{ $font: string; $weight?: number; $italic?: boolean; $caps?: boolean; $color: string }>`
  font-family: ${(p) => p.$font}, sans-serif;
  font-weight: ${(p) => p.$weight || 400};
  font-style: ${(p) => (p.$italic ? 'italic' : 'normal')};
  font-variant: ${(p) => (p.$caps ? 'small-caps' : 'normal')};
  color: ${(p) => p.$color};
`;

function HomeRibbon() {
  return (
    <>
      <Group $w={122}>
        <GroupBody $pad={9}>
          <BigButton $w={40}><PasteIcon />粘贴<Down /></BigButton>
          <SmallColumn $pad={4}>
            <SmallButton><CutIcon />剪切</SmallButton>
            <SmallButton><CopyIcon />复制</SmallButton>
            <SmallButton><BrushIcon />格式刷</SmallButton>
          </SmallColumn>
        </GroupBody>
        <GroupName>剪贴板</GroupName>
        <LaunchIcon />
      </Group>
      <GroupLine />
      <Group $w={343}>
        <GroupBody $pad={6}>
          <ToolRows>
            <ToolRow>
              <ComboBox $w={107}><select aria-label="字体"><option>宋体</option></select><Down /></ComboBox>
              <ComboBox $w={46}><select aria-label="字号"><option>五号</option></select><Down /></ComboBox>
              <ThinLine $h={1} $gap={2} />
              <PlainTool>A<Blue>▲</Blue></PlainTool>
              <PlainTool>A<Blue>▼</Blue></PlainTool>
              <ThinLine />
              <DropTool w={36}>Aa</DropTool>
              <ThinLine />
              <PlainTool><EraserIcon /></PlainTool>
              <PlainTool><Pinyin>wén<b>文</b></Pinyin></PlainTool>
              <PlainTool><BoxedLetter>A</BoxedLetter></PlainTool>
            </ToolRow>
            <ToolRow>
              <PlainTool><b>B</b></PlainTool>
              <PlainTool><i>I</i></PlainTool>
              <DropTool w={40}><u>U</u></DropTool>
              <PlainTool><s>abc</s></PlainTool>
              <PlainTool><b>x</b><sub><Blue>2</Blue></sub></PlainTool>
              <PlainTool><b>x</b><sup><Blue>2</Blue></sup></PlainTool>
              <ThinLine />
              <DropTool w={38}><PaleLetter>A</PaleLetter></DropTool>
              <DropTool w={39}><BarLetter $c="#ff0" $small>ab</BarLetter></DropTool>
              <DropTool w={39}><BarLetter $c="#f00">A</BarLetter></DropTool>
              <PlainTool><ShadedLetter>A</ShadedLetter></PlainTool>
              <PlainTool><RoundLetter>字</RoundLetter></PlainTool>
            </ToolRow>
          </ToolRows>
        </GroupBody>
        <GroupName>字体</GroupName>
        <LaunchIcon />
      </Group>
      <GroupLine />
      <Group $w={291}>
        <GroupBody $pad={7}>
          <ToolRows>
            <ToolRow>
              <DropTool w={39}><ListIcon kind="dot" /></DropTool>
              <DropTool w={39}><ListIcon kind="num" /></DropTool>
              <DropTool w={38}><ListIcon kind="multi" /></DropTool>
              <ThinLine />
              <PlainTool><IndentIcon /></PlainTool>
              <PlainTool><IndentIcon flip /></PlainTool>
              <ThinLine />
              <DropTool w={38}><WidthIcon /></DropTool>
              <ThinLine />
              <PlainTool><SortAZ /></PlainTool>
              <ThinLine />
              <PlainTool><MarksIcon /></PlainTool>
            </ToolRow>
            <ToolRow>
              <PlainTool on><ParaLines xs={[[1, 15], [1, 11], [1, 15], [1, 11], [1, 15]]} /></PlainTool>
              <PlainTool><ParaLines xs={[[1, 15], [3, 13], [1, 15], [3, 13], [1, 15]]} /></PlainTool>
              <PlainTool><ParaLines xs={[[1, 15], [5, 15], [1, 15], [5, 15], [1, 15]]} /></PlainTool>
              <PlainTool><ParaLines xs={[[1, 15], [1, 15], [1, 15], [1, 15], [1, 15]]} /></PlainTool>
              <PlainTool><DistIcon /></PlainTool>
              <ThinLine />
              <DropTool w={38}><SpacingIcon /></DropTool>
              <ThinLine />
              <DropTool w={38}><FillIcon /></DropTool>
              <DropTool w={36}><BorderIcon /></DropTool>
            </ToolRow>
          </ToolRows>
        </GroupBody>
        <GroupName>段落</GroupName>
        <LaunchIcon />
      </Group>
      <GroupLine />
      <Group>
        <GroupBody>
          <Gallery>
            {styleCards.map((s) => (
              <StyleCard key={s.name} $on={s.on}>
                <StylePreview $size={s.size}>
                  <PreviewText $font={s.font} $weight={s.weight} $italic={s.italic} $caps={s.caps} $color={s.color}>{s.text}</PreviewText>
                </StylePreview>
                <StyleName>{s.name}</StyleName>
              </StyleCard>
            ))}
            <GalleryMore aria-label="其他样式"><Svg w={8} h={8}><path d="M0 1.500h8M1 4l3 3 3-3" stroke="#333" /></Svg></GalleryMore>
          </Gallery>
        </GroupBody>
        <GroupName>样式</GroupName>
        <LaunchIcon />
      </Group>
      <GroupLine />
      <Group $w={92}>
        <GroupBody $pad={11}>
          <SmallColumn>
            <SmallButton><FindIcon />查找<Caret /><Down /></SmallButton>
            <SmallButton><ReplaceIcon />替换</SmallButton>
            <SmallButton><PointerIcon />选择<Down /></SmallButton>
          </SmallColumn>
        </GroupBody>
        <GroupName>编辑</GroupName>
      </Group>
      <GroupLine />
      <Group $w={57}>
        <GroupBody $pad={7}><BigButton $w={44} $off><DotIcon />{'加\n载项'}</BigButton></GroupBody>
        <GroupName>加载项</GroupName>
      </Group>
      <GroupLine />
    </>
  );
}

type Node = { t: string; l: number; a?: 'open' | 'closed'; on?: boolean };

const leftTree: Node[] = [
  { t: '一 投标函', l: 0 },
  { t: '二 法定代表人（单位负责人）身份证明', l: 0 },
  { t: '三 授权委托书', l: 0 },
  { t: '四 联合体协议书', l: 0 },
  { t: '五 投标保证金', l: 0 },
  { t: '六 商务和技术偏差表', l: 0 },
  { t: '七 报价表', l: 0, a: 'open' },
  { t: '1 开标一览表格式', l: 1 },
  { t: '2 综合报价表格式', l: 1 },
  { t: '八 资格审查资料', l: 0, a: 'open' },
  { t: '1 基本情况表', l: 1 },
  { t: '1.1 开户许可证', l: 2 },
  { t: '2 近年财务状况表', l: 1 },
  { t: '3 近年完成的类似项目情况表', l: 1 },
  { t: '4 正在供货和新承接的项目情况表', l: 1 },
  { t: '5 近年发生的诉讼及仲裁及企业信誉情况', l: 1 },
  { t: '6 其他资格审查资料', l: 1 },
  { t: '6.1 行业许可及相关资质', l: 2 },
  { t: '6.2 物资装备供应商类型（制造商）', l: 2 },
  { t: '6.3 相关业绩及客户评价', l: 2 },
  { t: '6.4 有效性', l: 2, on: true },
  { t: '6.5 法律要求', l: 2, a: 'closed' },
  { t: '6.6 信誉要求', l: 2, a: 'closed' },
  { t: '6.7 质量管理能力', l: 2 },
  { t: '6.8 HSE管理能力', l: 2 },
  { t: '6.9 产品质量事故记录', l: 2 },
  { t: '6.10 财务状况', l: 2 },
  { t: '6.11 禁止投标', l: 2 },
  { t: '6.12 联合体要求', l: 2 },
  { t: '6.13 分包', l: 2 },
  { t: '6.14 资料真实性承诺', l: 2 },
  { t: '6.15 投标人履约承诺', l: 2 },
  { t: '6.16 履约保证金提交承诺', l: 2 },
];

const rightTree: Node[] = [
  { t: '第一卷', l: 0, a: 'open' },
  { t: '第一章  招标公告', l: 1, a: 'open' },
  { t: '长城钻探2025-WZJC-物资主材-04 A06大类...', l: 2 },
  { t: '一、招标条件', l: 2 },
  { t: '二、项目概况与招标范围', l: 2 },
  { t: '三、投标人资格要求', l: 2, on: true },
  { t: '四、招标文件的获取', l: 2 },
  { t: '五、投标文件的递交', l: 2 },
  { t: '六、开标', l: 2 },
  { t: '七、其它', l: 2 },
  { t: '第二章  投标人须知', l: 1 },
  { t: '投标人须知前附表', l: 1, a: 'open' },
  { t: '1. 总则', l: 2 },
  { t: '2. 招标文件', l: 2 },
  { t: '3. 投标文件', l: 2 },
  { t: '4. 投标', l: 2 },
  { t: '5. 开标', l: 2 },
  { t: '6. 评标', l: 2 },
  { t: '7. 合同授予', l: 2 },
  { t: '8. 纪律和监督', l: 2 },
  { t: '9. 是否采用电子招标投标', l: 2 },
  { t: '10. 需要补充的其他内容', l: 2 },
  { t: '第三章  评标办法', l: 1, a: 'open' },
  { t: '1. 评标方法', l: 2 },
  { t: '2. 评审标准', l: 2 },
  { t: '3. 评标程序', l: 2 },
  { t: '第四章  合同条款及格式', l: 1 },
  { t: '第二卷', l: 0, a: 'open' },
  { t: '第五章  供货要求', l: 1, a: 'open' },
  { t: '一、项目概况及总体要求', l: 2 },
  { t: '二、材料/设备需求一览表', l: 2 },
  { t: '三、质量要求/技术性能指标', l: 2 },
  { t: '四、验收方法、标准/检验考核要求', l: 2 },
];

function Navigation({ tree, side }: { tree: Node[]; side: Side }) {
  return (
    <NavPane>
      <NavHead>
        <h2>导航</h2>
        <Svg w={14} h={10}><path d="M1 2l6 6 6-6" stroke="#444" /></Svg>
        <Cross c="#444" s={12} />
      </NavHead>
      <NavSearch>
        <input placeholder="在文档中搜索" aria-label="在文档中搜索" />
        <Magnifier />
        <Down s={8} />
      </NavSearch>
      <NavTabs $start={side === 'left' ? 49 : 0}>
        {side === 'right' && <NavTab $active>标题</NavTab>}
        <NavTab>页面</NavTab>
        <NavTab>结果</NavTab>
      </NavTabs>
      <JumpTop aria-label="跳到开头"><Svg w={8} h={7}><path d="M0 .5h8" stroke="#333" /><path d="M0 6l4-4 4 4z" fill="#333" stroke="none" /></Svg></JumpTop>
      <Tree>
        {tree.map((n) => (
          <TreeRow key={n.t + n.l} $level={n.l}>
            <TreeArrow>
              {n.a === 'open' && <Svg w={7} h={7}><path d="M6.500 0v6.500H0z" fill="#444" stroke="none" /></Svg>}
              {n.a === 'closed' && <Svg w={6} h={9}><path d="M1.500 1v7l4-3.500z" stroke="#888" fill="#fff" /></Svg>}
            </TreeArrow>
            <TreeLabel $on={n.on}>{n.t}</TreeLabel>
          </TreeRow>
        ))}
      </Tree>
    </NavPane>
  );
}

function RulerCells({ last, gap }: { last: number; gap: number }) {
  const nums = [6, 4, 2, 0];
  for (let n = 2; n <= last; n += 2) nums.push(n);
  return <>{nums.map((n, i) => <HCell key={i} $gap={gap}><span>{n || ''}</span></HCell>)}</>;
}
const DownMark = () => <Svg w={11} h={11}><path d="M.5.5h10v4l-5 5-5-5z" fill="#fff" stroke="#888" /></Svg>;
const UpMark = () => <Svg w={11} h={10}><path d="M.5 9.500h10v-4l-5-5-5 5z" fill="#fff" stroke="#888" /></Svg>;
const BoxMark = () => <Svg w={11} h={17}><path d="M.5 10.500h10v-5l-5-5-5 5zM.5 10.500h10v6H.5z" fill="#fff" stroke="#888" /></Svg>;

const rows = [
  ['A06020102', '普通硅酸盐水泥'],
  ['A06020202', '砌筑水泥'],
  ['A06020106', '复合硅酸盐水泥'],
  ['A06020103', '矿渣硅酸盐水泥'],
];
const columns = [
  { name: '物料分类码', w: 111, sort: true },
  { name: '物料分类名称', w: 127, sort: true },
  { name: '物资级别', w: 99, sort: true },
  { name: '准入单位', w: 199 },
  { name: '产品类型', w: 127, sort: true },
  { name: '制造商名称', w: 199, sort: true },
  { name: '产品范围', w: 146, sort: true },
];

const Filters = () => (
  <FilterRow>
    <FilterLabel $w={61}>物料分类码：</FilterLabel>
    <Field $w={187}><input placeholder="请输入物料分类码" aria-label="物料分类码" /></Field>
    <FilterLabel $w={52} $gap={68}>物资级别：</FilterLabel>
    <Field $w={188}><select aria-label="物资级别"><option>请选择</option></select><Down c="#bbb" /></Field>
    <PortalButton $red>查询</PortalButton>
    <PortalButton>重置</PortalButton>
  </FilterRow>
);

function SupplierPortal() {
  return (
    <Portal>
      <PortalHeader>
        <Svg w={29} h={29} vb="0 0 30 30">
          <g stroke="none">
            <path d="M15 0c3 0 5 1 6 3 3 0 5 2 5 5 3 1 4 4 3 7H1c-1-3 0-6 3-7 0-3 2-5 5-5 1-2 3-3 6-3z" fill="#f8a51b" />
            <path d="M1 15l14 1 14-1c1 3-1 6-3 7 0 3-3 5-5 5-1 2-3 3-6 3s-5-1-6-3c-3 0-5-2-5-5-2-1-4-4-3-7z" fill="#c8161d" />
            <path d="M15 17 1 20v-5c5-3 9-3 14 0 5-3 9-3 14 0v5z" fill="#f8b01b" />
            <path d="M3 20c4-3 20-3 24 0l-2 3H5z" fill="#c8161d" />
          </g>
          <path d="M15 15V3M15 15 8 5M15 15l7-10M15 15 3 11M15 15l12-4" stroke="#fff4c0" />
        </Svg>
        <Brand>云梦泽</Brand>
        <RedTab>供应商工作台</RedTab>
        <PlainTab>供应商管理端</PlainTab>
        <HeaderLink href="#supplier">物资供应商 <Down c="#666" /></HeaderLink>
        <Field $w={190} $gap={8}><select aria-label="用户组"><option>请选择用户组</option></select><Down c="#bbb" /></Field>
        <ThinLine $h={0} $gap={8} />
        <HeaderLink href="#bench"><Svg w={8} h={8}><path d="M4 0 0 4v4h3V5h2v3h3V4z" fill="#222" stroke="none" /></Svg>我的工作台</HeaderLink>
        <ThinLine $h={10} $gap={18} />
      </PortalHeader>
      <PortalBody>
        <SideMenu>
          <SideSearch>
            <label><input placeholder="搜索菜单" aria-label="搜索菜单" /><Svg w={8} h={9}><circle cx="4" cy="4" r="3" /><path d="M5.500 6 7.500 8.500" /></Svg></label>
            <button aria-label="收起菜单"><Svg w={9} h={9}><path d="M1 1.500h8M4 4.500h5M1 7.500h8M0 4.500h3" stroke="#555" /></Svg></button>
          </SideSearch>
          <MenuItem>供应商管理自助服务<Down c="#888" /></MenuItem>
          <MenuItem $open>供应商管理进度查询<Up c="#888" /></MenuItem>
          <SubItem $on>信息查询</SubItem>
          <SubItem>进度查询</SubItem>
          <SubItem>查看冻结解冻历史</SubItem>
          <MenuItem>订单管理<Down c="#888" /></MenuItem>
          <MenuItem>商品管理<Down c="#888" /></MenuItem>
          <MenuItem>账期对账<Down c="#888" /></MenuItem>
          <MenuItem>主数据查询<Down c="#888" /></MenuItem>
        </SideMenu>
        <PortalMain>
          <TabStrip>
            <PageTab>首页<Cross s={6} /></PageTab>
            <PageTab $on>信息查询<Svg w={8} h={8}><path d="M1 5V1.500h5M7 3v3.500H2" stroke="#888" /></Svg><Cross s={6} /></PageTab>
          </TabStrip>
          <PortalContent>
            <h3>供应商基本信息</h3>
            <InfoLine>
              供应商名称：<RedFrame>盘锦鑫业商贸有限公司</RedFrame>
              供应商编码：<InfoValue>1001536926</InfoValue>
              供应商状态：<InfoValue>正常</InfoValue>
            </InfoLine>
            <InnerTabs>
              <InnerTab>基本信息</InnerTab>
              <InnerTab $on>产品信息</InnerTab>
              <InnerTab>资质信息</InnerTab>
            </InnerTabs>
            <SectionHead $top={9}>已添加的准入产品</SectionHead>
            <Filters />
            <CustomButton>表格定制<Svg w={7} h={7}><path d="M0 1h2M2.500 1h2M5 1h2M0 3.500h2M2.500 3.500h2M5 3.500h2M0 6h2M2.500 6h2M5 6h2" stroke="#333" strokeWidth="1.800" /></Svg></CustomButton>
            <TableArea>
              <DataTable>
                <colgroup>{columns.map((c) => <col key={c.name} width={c.w} />)}</colgroup>
                <thead>
                  <tr>{columns.map((c) => <th key={c.name}>{c.name}{c.sort && <Sort />}</th>)}</tr>
                </thead>
                <tbody>
                  {rows.map(([code, name]) => (
                    <tr key={code}>
                      <td>{code}</td><td>{name}</td><td>二级</td><td>辽河油田分公司</td><td>贸易商</td><td></td><td>国内</td>
                    </tr>
                  ))}
                </tbody>
              </DataTable>
              <GreenFrame />
            </TableArea>
            <Pager>
              共 4 条
              <PagerGap />
              <PagerButton aria-label="上一页"><Svg w={5} h={6}><path d="M4 0 1 3l3 3" stroke="#bbb" /></Svg></PagerButton>
              <PagerButton $on>1</PagerButton>
              <PagerButton aria-label="下一页"><Svg w={5} h={6}><path d="M1 0l3 3-3 3" stroke="#bbb" /></Svg></PagerButton>
              <Field $w={81} $gap={12}><select aria-label="每页条数"><option>20条/页</option></select><Down c="#bbb" /></Field>
              <FilterLabel $w={23} $gap={10}>前往</FilterLabel>
              <Field $w={36}><PageInput defaultValue="1" aria-label="页码" /></Field>
              <FilterLabel $w={9} $gap={5}>页</FilterLabel>
            </Pager>
            <SectionHead $top={12}>已剔除的产品</SectionHead>
            <Filters />
          </PortalContent>
          <BottomStrip />
          <ScrollGear />
        </PortalMain>
      </PortalBody>
      <EndMark><Return /></EndMark>
    </Portal>
  );
}
const PageInput = styled.input`
  text-align: center;
`;
const PagerGap = styled.span`
  width: 10px;
`;

const fullLines = [
  '以评标当日评标委员会在长城钻探供应商管理部门门户网站上查询的信息为准，同时须满足',
  '下列三种条件之一：（1）投标人为集团公司库内供应商，须提交集团公司物采平台查询截图，',
  '提供的截图要求其在集团公司供应商库内状态正常，且准入产品（以 8 位物资品名为准）与',
  '采购产品一致，产品状态正常。（2）投标人为集团公司库内供应商，须提交集团公司物采平',
  '台查询截图，提供的截图要求其在集团公司供应商库内状态正常，准入产品范围没有覆盖或',
  '没有完全覆盖到采购产品，且投标产品不处于非正常状态。（3）投标人非集团公司库内供应',
];
const PageOneText = styled.div`
  padding-top: 6px;
`;
const PageTwoText = styled.div`
  padding-top: 26px;
`;
const PageGap = styled.div`
  flex: 0 0 21px;
`;

const CheckedBox = () => (
  <Svg w={17} h={16}><rect x="1" y="2" width="14" height="13" stroke="#111" strokeWidth="1.300" /><path d="M4 8l3 4 6-8" stroke="#111" strokeWidth="1.600" /></Svg>
);

// 任务栏图标 24 x 24
const taskIcons: ReactNode[] = [
  <path d="M4 3h7v8H4zM12 3h8v8h-8zM4 12h7v8H4zM12 12h8v8h-8z" fill="#fff" />,
  <circle cx="12" cy="10" r="7.500" stroke="#fff" strokeWidth="2.500" />,
  <><path d="M3 0h18v24H3z" fill="#5d6d78" /><path d="M5 2h14v5H5z" fill="#5fd0f0" /><path d="M5 9h4v4H5zM10 9h4v4h-4zM15 9h4v4h-4zM5 14h4v4H5zM10 14h4v4h-4z" fill="#d5dbe0" /><path d="M15 14h4v6h-4z" fill="#1d4f9a" /></>,
  <><circle cx="12" cy="12" r="12" fill="#e8323c" /><path d="M12 12 0 12A12 12 0 0 1 12 0z" fill="#3fbf5a" /><path d="M12 12V0a12 12 0 0 1 12 12z" fill="#e83ad0" /><path d="M12 24A12 12 0 0 1 0 12h12z" fill="#f0c020" /><circle cx="12" cy="12" r="5" fill="#fff" /></>,
  <><path d="M1 2h22v20H1z" fill="#f39a1e" /><path d="M14 4h8v4h-8z" fill="#ffd28a" /><circle cx="12" cy="12" r="6" fill="#e8eef5" /><circle cx="12" cy="12" r="3.500" fill="#2e6fc0" /></>,
  <><circle cx="7" cy="12" r="6" fill="#0a5ab8" /><circle cx="19" cy="5" r="3.500" fill="#5fa8dc" /><circle cx="19" cy="14" r="2" fill="#2e7cc8" /></>,
  <><rect width="24" height="24" rx="4" fill="#fff" /><path d="M3 8h10v4h-2v9H7v-9H3z" fill="#1463ff" /><path d="M13 5h8v9l-4 3V9h-4z" fill="#12cdd8" /></>,
  <><rect width="24" height="24" rx="4" fill="#0f86e8" /><circle cx="12" cy="13" r="9" fill="#fff" /><circle cx="12" cy="13" r="3" fill="#0f86e8" /></>,
  <><path d="M2 11C3 3 13-1 19 4l2-1v8l-8-1 3-2C11 3 6 6 6 12z" fill="#6fae28" /><path d="M0 12l6-3 5 8-4-1c2 6 8 4 10 1l3 2c-5 6-15 5-17-3z" fill="#111f1f" /></>,
  <><circle cx="12" cy="12" r="12" fill="#f4f6fa" /><path d="M3 5l8 8-2-9 7 1-4 7 9-5M4 14l8-2 8 4M8 21l4-9 5 8" stroke="#1a3a8a" strokeWidth="2.500" /></>,
  <><path d="M6 2l12-1v5l-8 2z" fill="#fff" /><path d="M9 7h11v17h-9z" fill="#f3f3f3" /><path d="M12 10h6M12 13h6M12 16h6" stroke="#333" /></>,
  <><ellipse cx="9" cy="10" rx="9" ry="8" fill="#2dc35a" /><circle cx="6" cy="8" r="1.200" fill="#124" /><circle cx="12" cy="8" r="1.200" fill="#124" /><ellipse cx="17" cy="16" rx="7" ry="6" fill="#eee" /><circle cx="15" cy="14" r="1" fill="#888" /><circle cx="19" cy="14" r="1" fill="#888" /></>,
  <><circle cx="12" cy="12" r="11" fill="#123010" stroke="#7fd32a" strokeWidth="1.500" /><path d="M4 4l5 1 9 11-4 3L5 9z" fill="#fff" /></>,
  <><rect x="2" y="1" width="20" height="22" rx="3" fill="#001d2c" stroke="#31c5f0" strokeWidth="1.500" /><text x="12" y="16" fontSize="12" fill="#fff" textAnchor="middle" fontFamily="Open Sans" fontWeight="600">Ps</text></>,
  <><rect width="24" height="24" rx="4" fill="#fff" /><ellipse cx="12" cy="10" rx="6" ry="8" fill="#111" /><ellipse cx="12" cy="9" rx="4" ry="1.500" fill="#f6b21b" /><path d="M5 12c4 3 10 3 14 0v4H5z" fill="#e8202a" /></>,
  <text x="12" y="15" fontSize="12" fill="#4a90d9" textAnchor="middle" fontFamily="Liberation Serif" fontStyle="italic">xin)</text>,
  <><circle cx="11" cy="11" r="8.500" stroke="#2f8fe8" strokeWidth="4" /><path d="M14 15l5-4 4 7z" fill="#c8c81e" /></>,
  <><rect x="2" y="1" width="20" height="22" fill="#4a0a08" stroke="#e8200c" strokeWidth="2" /><path d="M6 17c4-2 7-8 5-11-2 5 4 9 8 8-4-1-9 0-13 3z" stroke="#fff" strokeWidth="1.300" /></>,
  <><circle cx="12" cy="12" r="9" stroke="#2f8fe8" strokeWidth="5" /><circle cx="18" cy="18" r="4" fill="#fff" /></>,
  <><path d="M6 1h18v22H6z" fill="#21a366" /><path d="M15 1h9v7h-9z" fill="#33c481" /><path d="M0 6h12v12H0z" fill="#107c41" /><text x="6" y="16" fontSize="11" fill="#fff" textAnchor="middle" fontFamily="Open Sans" fontWeight="700">X</text></>,
  <><path d="M6 1h18v22H6z" fill="#2b7cd3" /><path d="M6 1h18v6H6z" fill="#41a5ee" /><path d="M0 6h12v12H0z" fill="#185abd" /><text x="6" y="16" fontSize="10" fill="#fff" textAnchor="middle" fontFamily="Open Sans" fontWeight="700">W</text></>,
  <><path d="M7 1h14l-3 23H1z" fill="#9ad0dc" /><path d="M7 1h14v3H6z" fill="#e8e8e8" /></>,
  <><path d="M1 5c6-2 9 0 12 5v9c-1-6-3-8-9-9 3 0 2-3-3-5z" fill="#f08a24" /><path d="M14 24V12c0-6 3-9 9-10-1 6-4 5-5 9v13z" fill="#149a4a" /></>,
  <><path d="M1 3h8l2 3h12v18H1z" fill="#e8a51e" /><path d="M1 8h22v16H1z" fill="#ffd665" /><path d="M5 14h14v10H5z" fill="#3f9be8" /></>,
];

function BottomBars({ side }: { side: Side }) {
  const left = side === 'left';
  return (
    <>
      <StatusBar $start={left ? 46 : 12}>
        <StatusItem>{left ? '页，共 96 页' : '第 6 页，共 84 页'}</StatusItem>
        <StatusItem>{left ? '10700 个字' : '3/38374 个字'}</StatusItem>
        {left && <Svg w={14} h={12}><path d="M.5.5h6v10h-6zM6.500 10.500V.5H10M6.500 10.500H13V9M9 3l4 4M13 3 9 7" /></Svg>}
        <StatusItem>简体中文(中国大陆)</StatusItem>
        <StatusItem>修订: 关闭</StatusItem>
        <StatusItem>
          <Svg w={16} h={14}><path d="M6 2a5 5 0 1 0 4 8M7 1v6M4 5l3 3 3-3M11 6c0-2 4-2 4 0s-2 2-2 4M13 11v2" stroke="#555" strokeWidth="1.200" /></Svg>
          辅助功能: {left ? '调查' : '不可用'}
        </StatusItem>
        <ViewModes>
          <ViewMode aria-label="阅读视图"><Svg w={13} h={12}><path d="M.5 1.500h5l1 1 1-1h5v9h-5l-1 1-1-1h-5zM6.500 2v10M2 4.500h3M2 6.500h3M2 8.500h3M8 4.500h3M8 6.500h3M8 8.500h3" /></Svg></ViewMode>
          <ViewMode $on aria-label="页面视图"><Svg w={14} h={12}><path d="M.5.5h13v11H.5zM2 3.500h10M2 5.500h10M2 7.500h10M2 9.500h10" stroke="#555" /></Svg></ViewMode>
          <ViewMode aria-label="Web 版式视图"><Svg w={14} h={12}><path d="M6 9.500H.5v-9h11V4M2 3.500h8M2 5.500h5M2 7.500h4" /><circle cx="10" cy="8" r="3.500" fill="#777" /></Svg></ViewMode>
        </ViewModes>
        <Zoom>{left ? '130%' : '140%'}</Zoom>
      </StatusBar>
      <TaskBar>
        {taskIcons.map((icon, i) => (
          <TaskSlot key={i} $on={i === 22} aria-label={`任务 ${i + 1}`}>
            <svg width="24" height="24" viewBox="0 0 24 24" fill="none">{icon}</svg>
          </TaskSlot>
        ))}
        <Clock>8:07</Clock>
      </TaskBar>
    </>
  );
}

export default function App() {
  return (
    <Desktop>
      <GlobalStyle />
      <Screen>
        <WordWindow $cutLeft={42}>
          <TopBars title="投标文件.docx  -  Word" side="left" active="视图" />
          <Workspace>
            <Navigation tree={leftTree} side="left" />
            <DocArea>
              <RulerSide>
                <TabStop aria-label="制表符"><Svg w={6} h={7}><path d="M1 0v6h5" stroke="#555" strokeWidth="2" /></Svg></TabStop>
              </RulerSide>
              <DocColumn>
                <HRuler $side={33} $left={120} $right={124}>
                  <HCells $before={4} $after={8}><RulerCells last={72} gap={17} /></HCells>
                  <Marker $left={123} $top={-3}><DownMark /></Marker>
                  <Marker $left={123} $top={8}><BoxMark /></Marker>
                  <Marker $right={123} $top={10}><UpMark /></Marker>
                </HRuler>
                <Pages $side={33}>
                  <Paper $margin={121}>
                    <Corner $x="left" $m={121} $top={4} />
                    <Corner $x="right" $m={121} $top={4} />
                    <Corner $x="left" $m={121} $bottom={-27} $foot />
                    <Corner $x="right" $m={121} $bottom={-27} $foot />
                    <SupplierPortal />
                  </Paper>
                </Pages>
              </DocColumn>
              <ScrollBar>
                <ScrollPart aria-label="向上滚动"><Svg w={8} h={5}><path d="M0 5l4-4 4 4z" fill="#222" stroke="none" /></Svg></ScrollPart>
                <ScrollTrack $part={54} />
                <ScrollPart aria-label="滚动块" />
                <ScrollTrack $part={46} />
                <ScrollPart aria-label="向下滚动"><Svg w={8} h={5}><path d="M0 0l4 4 4-4z" fill="#222" stroke="none" /></Svg></ScrollPart>
              </ScrollBar>
            </DocArea>
          </Workspace>
          <BottomBars side="left" />
        </WordWindow>
      </Screen>
      <Screen>
        <WordWindow $cutRight={3}>
          <TopBars title="GWDC-NB-2025-WZGS-WJ-00020招标文件.doc [兼容模式]  -  Word" side="right" active="开始" />
          <Workspace>
            <Navigation tree={rightTree} side="right" />
            <DocArea>
              <RulerSide>
                <TabStop aria-label="制表符"><Svg w={6} h={7}><path d="M1 0v6h5" stroke="#555" strokeWidth="2" /></Svg></TabStop>
                <VRuler>
                  <VCells>{[52, 54, 56, 58, 60, 62, 64].map((n) => <VCell key={n}><span>{n}</span></VCell>)}</VCells>
                </VRuler>
              </RulerSide>
              <DocColumn>
                <HRuler $side={209} $left={136} $right={139}>
                  <HCells $before={7} $after={0}><RulerCells last={46} gap={19} /></HCells>
                  <Marker $left={178} $top={-3}><DownMark /></Marker>
                  <Marker $left={137} $top={8}><BoxMark /></Marker>
                  <Marker $right={138} $top={10}><UpMark /></Marker>
                </HRuler>
                <Pages $side={209}>
                  <Paper $margin={136} $h={290}>
                    <Corner $x="left" $m={136} $bottom={98} $foot />
                    <Corner $x="right" $m={136} $bottom={98} $foot />
                    <PageOneText>
                      <DocLine $indent $w={362}>2. 提供对应业绩的用户评价证明。<Return /></DocLine>
                      <DocLine $indent $w={177}>（四）有效性<Return /></DocLine>
                      <DocLine $indent $w={195}><CheckedBox />社会公开招标<Return /></DocLine>
                    </PageOneText>
                    <PageNumber $top={58}>6<Return /></PageNumber>
                  </Paper>
                  <PageGap />
                  <Paper $margin={136}>
                    <Corner $x="left" $m={136} $top={97} />
                    <Corner $x="right" $m={136} $top={97} />
                    <PageNumber $top={78}><Return /></PageNumber>
                    <PageTwoText>
                      <DocLine $indent>在社会公开招标时，投标人未在长城钻探公司供应商黑名单和不良记录供应商名单中，</DocLine>
                      {fullLines.map((t) => <DocLine key={t}>{t}</DocLine>)}
                      <DocLine $w={322}>商，无需提供集团物采平台截图。<Return /></DocLine>
                      <DocLine $indent $w={198}>（五）法律要求<Return /></DocLine>
                      <DocLine $indent $w={672}>1. 法人或经工商行政管理部门登记注册并领取营业执照的分支机构。<Return /></DocLine>
                      <DocLine $indent $w={370}>2. 事业单位须提供事业单位法人证书。</DocLine>
                    </PageTwoText>
                  </Paper>
                </Pages>
              </DocColumn>
              <RulerSide />
            </DocArea>
          </Workspace>
          <BottomBars side="right" />
        </WordWindow>
      </Screen>
    </Desktop>
  );
}
